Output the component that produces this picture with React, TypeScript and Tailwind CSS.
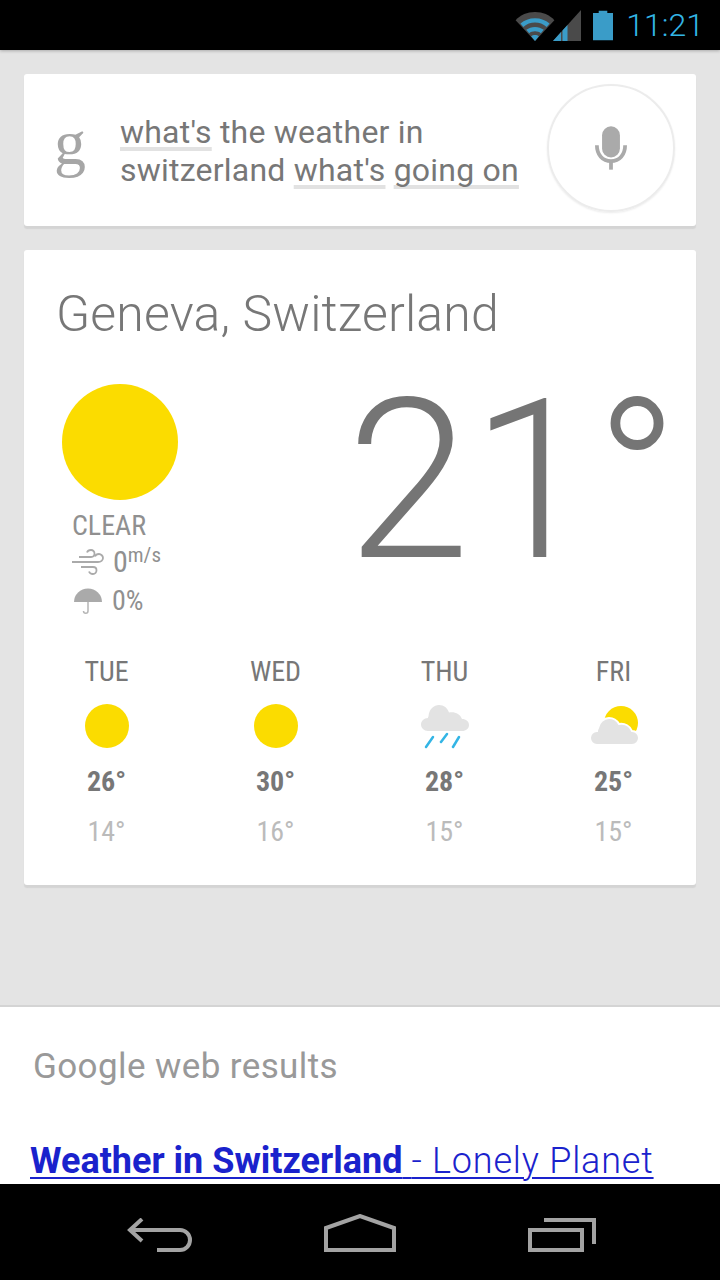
const font = { fontFamily: "Roboto, sans-serif" };

function Wind() {
  return (
    <svg width="34" height="26" viewBox="0 0 34 26" fill="none" stroke="#aaa" strokeWidth="1.800">
      <path d="M1 13h26c3 0 5-2 5-4s-2-4-4-4-3.500 1-4 2.500" />
      <path d="M8 8h12c2 0 3.500-1.500 3.500-3.500S22 1 20 1s-3.500 1-4 2.500" />
      <path d="M10 18h12c2 0 3.500 1.500 3.500 3.300S24 25 22 25s-3.500-1-4-2.500" />
    </svg>
  );
}

function Umbrella() {
  return (
    <svg width="28" height="27" viewBox="0 0 28 27">
      <path d="M0 14a14 13.500 0 0 1 28 0z" fill="#aaa" />
      <path d="M14 14v9c0 3-4.500 3-4.500 0" fill="none" stroke="#b5b5b5" strokeWidth="1.500" />
    </svg>
  );
}

function Sun({ size }: { size: number }) {
  return <div className="rounded-full bg-[#fbdc00]" style={{ width: size, height: size }} />;
}

function RainCloud() {
  return (
    <svg width="50" height="50" viewBox="0 0 50 50">
      <path
        d="M8 30c-4 0-7-3-7-6.500S4 17 8 17c0-1 0-1 .5-1.500C9 8 14 4 19 4c5 0 8.500 3 10 7.500 6-1 11 1.500 13 6.500 4 0 7 2.500 7 6s-3 6-7 6z"
        fill="#e3e3e3"
      />
      <g stroke="#33b5e5" strokeWidth="2.500" strokeLinecap="round">
        <path d="M13 36 6 46" />
        <path d="M27 33 21 41" />
        <path d="M39 36 33 46" />
      </g>
    </svg>
  );
}

function SunCloud() {
  return (
    <svg width="52" height="42" viewBox="0 0 50 42">
      <circle cx="32" cy="18" r="17" fill="#fbdc00" />
      <path
        d="M8 40c-4 0-7-3-7-7s3-7 7-7c0-1 .5-2 1-3 1-6 6-10 11-10 5 0 8 2.500 10 6 6-1 11 2 13 7 4 0 7 3 7 7s-3 7-7 7z"
        fill="#e3e3e3"
        stroke="#fff"
        strokeWidth="2"
      />
    </svg>
  );
}

const days = [
  { name: "TUE", hi: "26°", lo: "14°", icon: <Sun size={44} /> },
  { name: "WED", hi: "30°", lo: "16°", icon: <Sun size={44} /> },
  { name: "THU", hi: "28°", lo: "15°", icon: <RainCloud /> },
  { name: "FRI", hi: "25°", lo: "15°", icon: <SunCloud /> },
];

const mark = "underline decoration-[#e2e2e2] decoration-[4px] underline-offset-[4px] [text-decoration-skip-ink:none]";

export default function App() {
  return (
    <div className="flex h-[1280px] w-[720px] flex-col overflow-hidden bg-[#e4e4e4]" style={font}>
      {/* status bar */}
      <div className="flex h-[50px] shrink-0 items-center justify-end bg-black pr-[16px] shadow-[0_1px_3px_rgba(0,0,0,0.25)]">
        <svg className="mr-[-2px]" width="40" height="31" viewBox="0 0 40 32">
          <path d="M0 10.500C5 5 12 2 20 2s15 3 20 8.500L20 32z" fill="#4a4a4a" />
          <path d="M5 14C9 10.500 14 8.500 20 8.500S31 10.500 35 14l-3 3.500C28.500 14.500 24.500 13 20 13s-8.500 1.500-12 4.500z" fill="#3a9cc8" />
          <path d="M11 20.500C13.500 18.500 16.500 17.500 20 17.500s6.500 1 9 3l-3 3.500c-1.500-1.300-3.500-2-6-2s-4.500.7-6 2z" fill="#3a9cc8" />
          <path d="M16 27c1-.8 2.500-1.300 4-1.300s3 .5 4 1.300l-4 5z" fill="#3a9cc8" />
        </svg>
        <svg width="28" height="31" viewBox="0 0 28 31">
          <path d="M0 31 28 0v31z" fill="#4a4a4a" />
          <path d="M0 31l8-9v9zM9.500 31V20.500l5-5.500v16z" fill="#3a9cc8" />
        </svg>
        <svg className="ml-[12px]" width="20" height="31" viewBox="0 0 21 31">
          <path d="M6 0h9v2.500h6V31H0V2.500h6z" fill="#3a9cc8" />
        </svg>
        <span className="ml-[13px] text-[32px] leading-none font-light text-[#33b5e5]">11:21</span>
      </div>

      {/* cards */}
      <div className="flex h-[955px] shrink-0 flex-col gap-[24px] px-[24px] pt-[24px]">
        <div className="flex h-[152px] items-center rounded-[3px] bg-white pr-[21px] pl-[30px] shadow-[0_3px_1px_#d4d4d4]">
          <span className="mt-[-14px] w-[66px] text-[64px] leading-none text-[#a6a6a6]" style={{ fontFamily: '"Liberation Serif", serif' }}>
            g
          </span>
          <div className="flex-1 pt-[2px] text-[32px] leading-[38px] tracking-[0.22px] text-[#777]">
            <div className="whitespace-nowrap">
              <span className={mark}>what's</span> the weather in
            </div>
            <div className="whitespace-nowrap">
              switzerland <span className={mark}>what's</span> <span className={mark}>going on</span>
            </div>
          </div>
          <div className="mt-[-5px] flex h-[128px] w-[128px] items-center justify-center rounded-full border-2 border-[#ececec] shadow-[0_1px_2px_rgba(0,0,0,0.08)]">
            <svg width="32" height="44" viewBox="0 0 34 46">
              <rect x="7.500" y="0" width="19" height="33" rx="9.500" fill="#aaa" />
              <path d="M2 20c0 10 6 17 15 17s15-7 15-17" fill="none" stroke="#aaa" strokeWidth="4" />
              <rect x="15" y="36" width="4" height="10" fill="#aaa" />
            </svg>
          </div>
        </div>

        <div className="flex h-[635px] flex-col rounded-[3px] bg-white px-[34px] pt-[33px] shadow-[0_3px_1px_#d4d4d4]">
          <div className="ml-[-2px] text-[50px] leading-[62px] font-light tracking-[0.15px] text-[#777]">Geneva, Switzerland</div>
          <div className="mt-[7px] flex h-[260px] justify-between">
            <div className="flex flex-col pl-[4px]">
              <div className="mt-[32px]">
                <Sun size={116} />
              </div>
              <div className="mt-[8px] pl-[10px] text-[28px] leading-[36px] text-[#909090] [font-stretch:75%]">CLEAR</div>
              <div className="flex items-center gap-[8px] pl-[9px] text-[#909090] [font-stretch:75%]">
                <Wind />
                <span className="text-[30px] leading-[36px]">
                  0<sup className="text-[21px] leading-none">m/s</sup>
                </span>
              </div>
              <div className="mt-[5px] flex items-center gap-[10px] pl-[12px] text-[28px] leading-[32px] text-[#909090] [font-stretch:75%]">
                <Umbrella />
                0%
              </div>
            </div>
            <div className="mt-[-3px] mr-[-18px] text-[222px] leading-[264px] tracking-[1px] text-[#757575] [font-weight:340]">21°</div>
          </div>
          <div className="mx-[-36px] mt-[44px] grid grid-cols-4 text-center">
            {days.map((d) => (
              <div key={d.name} className="flex flex-col items-center">
                <div className="text-[28px] leading-[32px] text-[#777] [font-stretch:75%]">{d.name}</div>
                <div className="flex h-[78px] w-full items-center justify-center pb-[2px]">{d.icon}</div>
                <div className="text-[28px] leading-[32px] font-bold text-[#777] [font-stretch:75%]">{d.hi}</div>
                <div className="mt-[18px] text-[28px] leading-[32px] text-[#bbb] [font-stretch:75%]">{d.lo}</div>
              </div>
            ))}
          </div>
        </div>
      </div>

      {/* results */}
      <div className="h-[179px] shrink-0 border-t-2 border-[#d4d4d4] bg-white pt-[38px] pl-[33px]">
        <div className="text-[35px] leading-[44px] tracking-[0.4px] text-[#999]">Google web results</div>
        <div className="mt-[50px] ml-[-3px] text-[36px] leading-[44px] whitespace-nowrap text-[#1a22cc] underline decoration-2 underline-offset-[4px]">
          <b className="font-bold">Weather in Switzerland</b> <span className="font-light tracking-[0.8px]">- Lonely Planet</span>
        </div>
      </div>

      {/* nav */}
      <div className="flex h-[96px] shrink-0 items-start bg-black">
        <svg className="mt-[34px] ml-[127px]" width="66" height="34" viewBox="0 0 66 34" fill="none" stroke="#a3a3a3" strokeWidth="4">
          <path d="M15 1 3 12l12 11" />
          <path d="M3 12h50a10 10 0 0 1 0 20H30" />
        </svg>
        <svg className="mt-[30px] ml-[131px]" width="72" height="38" viewBox="0 0 72 38" fill="none" stroke="#a3a3a3" strokeWidth="4">
          <path d="M2 36V14L36 2l34 12v22z" />
        </svg>
        <svg className="mt-[34px] ml-[132px]" width="68" height="34" viewBox="0 0 68 34" fill="none" stroke="#a3a3a3" strokeWidth="4">
          <path d="M2 12h52v20H2z" />
          <path d="M16 2h50v24" />
        </svg>
      </div>
    </div>
  );
}
